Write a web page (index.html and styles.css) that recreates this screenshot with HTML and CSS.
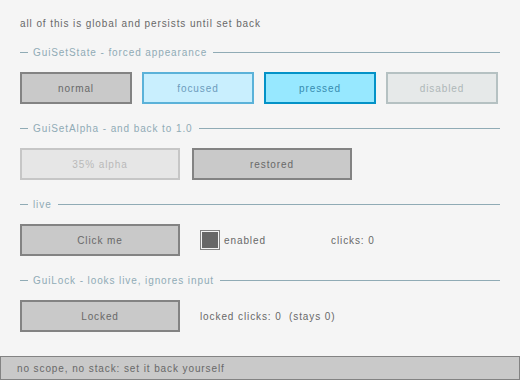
FILE: index.html
```html
<!DOCTYPE html>
<html lang="en">
<head>
    <meta charset="UTF-8">
    <meta name="viewport" content="width=device-width, initial-scale=1.0">
    <title>gui state</title>
    <link rel="stylesheet" href="styles.css">
</head>
<body>

<p class="intro">all of this is global and persists until set back</p>

<section class="group">
    <div class="heading"><span class="dash"></span><span class="label">GuiSetState - forced appearance</span><span class="rule"></span></div>
    <div class="row">
        <div class="btn normal small">normal</div>
        <div class="btn focused small">focused</div>
        <div class="btn pressed small">pressed</div>
        <div class="btn disabled small">disabled</div>
    </div>
</section>

<section class="group">
    <div class="heading"><span class="dash"></span><span class="label">GuiSetAlpha - and back to 1.0</span><span class="rule"></span></div>
    <div class="row wide">
        <div class="btn faded">35% alpha</div>
        <div class="btn normal">restored</div>
    </div>
</section>

<section class="group">
    <div class="heading"><span class="dash"></span><span class="label">live</span><span class="rule"></span></div>
    <div class="row wide">
        <div class="btn normal">Click me</div>
        <div class="check">
            <span class="box"><span class="fill"></span></span>
            <span class="text">enabled</span>
        </div>
        <span class="text">clicks: 0</span>
    </div>
</section>

<section class="group">
    <div class="heading"><span class="dash"></span><span class="label">GuiLock - looks live, ignores input</span><span class="rule"></span></div>
    <div class="row wide">
        <div class="btn normal">Locked</div>
        <span class="text">locked clicks: 0&nbsp;&nbsp;(stays 0)</span>
    </div>
</section>

<footer class="status">no scope, no stack: set it back yourself</footer>

</body>
</html>
```

FILE: styles.css
```css
body {
    background-color: #f5f5f5;
    font-family: "Liberation Sans", Arial, sans-serif;
    font-size: 10px;
    letter-spacing: 0.9px;
    color: #686868;
    margin: 0;
    padding: 0;
    height: 380px;
    display: flex;
    flex-direction: column;
    overflow: hidden;
}

.intro {
    margin: 18px 20px 16px;
    line-height: 12px;
}

.group {
    margin: 0 20px 18px;
}

.heading {
    display: flex;
    align-items: center;
    height: 12px;
    margin-bottom: 14px;
    color: #90abb5;
}

.dash {
    width: 8px;
    height: 1px;
    background-color: #90abb5;
}

.label {
    margin: 0 6px 0 5px;
    white-space: nowrap;
}

.rule {
    flex: 1;
    height: 1px;
    background-color: #90abb5;
}

.row {
    display: flex;
    align-items: center;
    gap: 10px;
    height: 32px;
}

.row.wide {
    gap: 20px;
}

.row.wide .btn + .btn {
    margin-left: -8px;
}

.btn {
    box-sizing: border-box;
    width: 160px;
    height: 32px;
    border: 2px solid;
    display: flex;
    align-items: center;
    justify-content: center;
}

.btn.small {
    width: 112px;
}

.normal {
    background-color: #c9c9c9;
    border-color: #838383;
    color: #686868;
}

.focused {
    background-color: #c9effe;
    border-color: #5bb2d9;
    color: #6c9bbc;
}

.pressed {
    background-color: #97e8ff;
    border-color: #0492c7;
    color: #368baf;
}

.disabled {
    background-color: #e6e9e9;
    border-color: #b5c1c2;
    color: #aeb7b8;
}

.faded {
    background-color: #e6e6e6;
    border-color: #c6c6c6;
    color: #b9b9b9;
}

.check {
    display: flex;
    align-items: center;
    gap: 4px;
    width: 131px;
    margin-right: -20px;
}

.box {
    box-sizing: border-box;
    width: 20px;
    height: 20px;
    border: 1px solid #838383;
    padding: 1px;
}

.fill {
    display: block;
    width: 16px;
    height: 16px;
    background-color: #686868;
}

.text {
    white-space: nowrap;
}

.status {
    margin-top: auto;
    box-sizing: border-box;
    height: 24px;
    border: 1px solid #838383;
    background-color: #c9c9c9;
    padding-left: 16px;
    display: flex;
    align-items: center;
}
```
